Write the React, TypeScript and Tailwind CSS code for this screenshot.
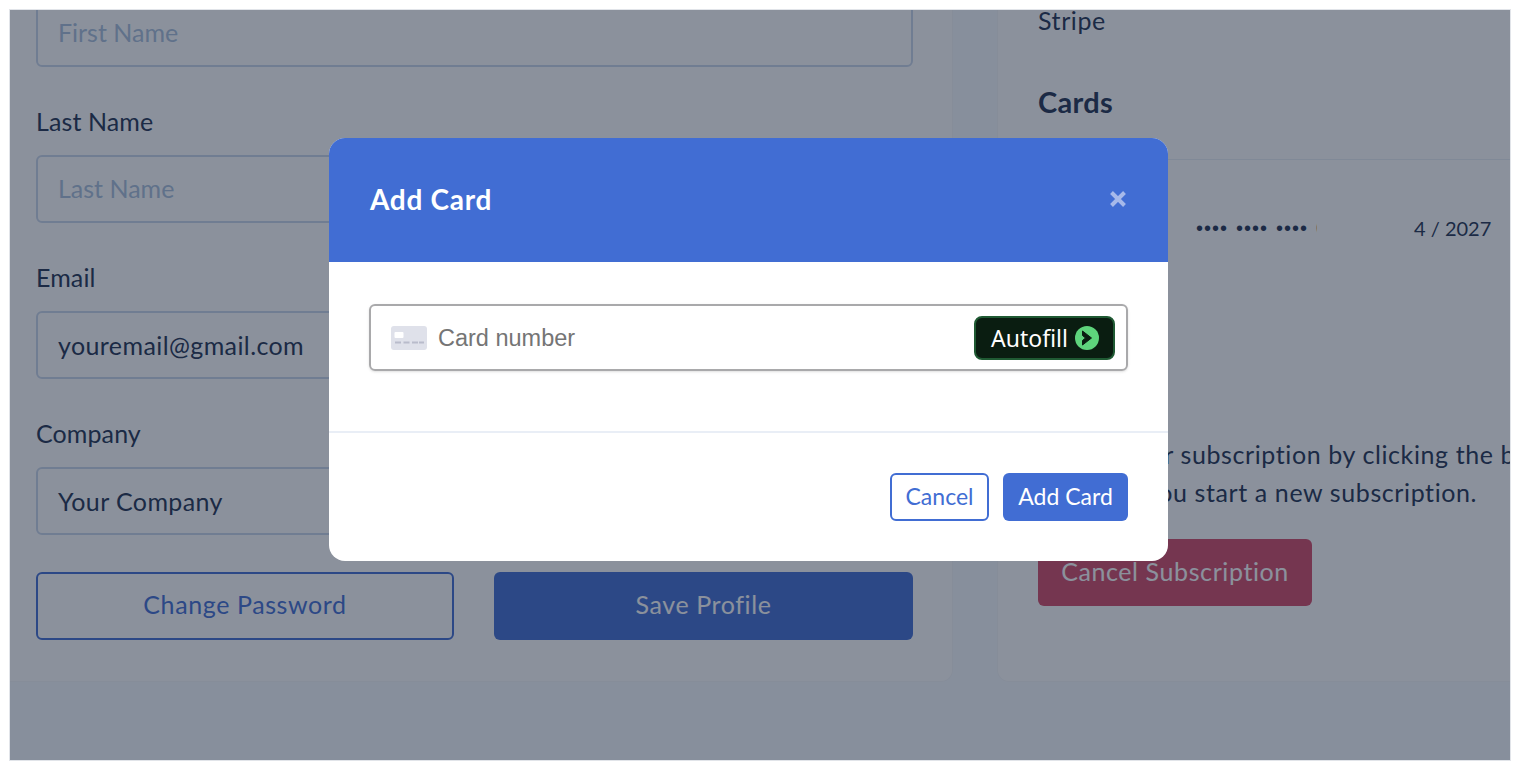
import React from 'react';

const fontBase = "font-['Lato','Open_Sans',sans-serif]";

function Field({ label, placeholder, value }: { label: string; placeholder?: string; value?: string }) {
  return (
    <div className="mb-[37px]">
      <label className="block h-9 mb-[15px] text-[25px] leading-[34px] tracking-[0.1px] text-[#213151]">{label}</label>
      <div className="h-[68px] flex items-center px-5 rounded-md border-2 border-[#c9d6ea] bg-white text-[25px]">
        {value ? <span className="pt-0.5 tracking-[0.4px] text-[#213151]">{value}</span> : <span className="text-[#a8bedb]">{placeholder}</span>}
      </div>
    </div>
  );
}

function CardGlyph() {
  return (
    <svg width="36" height="24" viewBox="0 0 36 24" className="shrink-0">
      <rect width="36" height="24" rx="3" fill="#dfe1ea" />
      <rect x="3.5" y="6" width="9" height="6" rx="1" fill="#ffffff" />
      <path d="M4 16.5h6M12.5 16.5h6M21 16.5h6M28 16.5h5" stroke="#b9bccb" strokeWidth="2" />
    </svg>
  );
}

function AutofillMark() {
  return (
    <svg width="24" height="24" viewBox="0 0 24 24" className="shrink-0">
      <circle cx="12" cy="12" r="12" fill="#5ed47c" />
      <path d="M7.5 5 16.5 12 7.5 19 7.5 14.5 10.5 12 7.5 9.5Z" fill="#0a1d11" stroke="#0a1d11" strokeWidth="1" strokeLinejoin="round" />
    </svg>
  );
}

export default function App() {
  return (
    <div className={`w-[1520px] h-[770px] bg-white p-[9px] ${fontBase}`}>
      <div className="border border-[#e1e4e9] w-[1502px] h-[752px]">
        <div className="relative w-[1500px] h-[750px] overflow-hidden bg-[#f7fbff]">
          <div className="flex gap-[44px] -ml-[15px] -mt-[11px] items-stretch">
            {/* profile form */}
            <div className="w-[958px] shrink-0 bg-white rounded-b-xl border border-[#f4f6f9] border-t-0 pl-10 pr-[39px] pb-[41px] pt-0">
              <div className="h-[68px] flex items-center px-5 rounded-md border-2 border-[#c9d6ea] mb-[37px] text-[25px] text-[#a8bedb]">
                First Name
              </div>
              <Field label="Last Name" placeholder="Last Name" />
              <Field label="Email" value="youremail@gmail.com" />
              <Field label="Company" value="Your Company" />
              <div className="grid grid-cols-[418px_419px] gap-10">
                <button className="h-[68px] rounded-md border-2 border-[#416dd3] text-[#416dd3] text-[25px] tracking-[0.6px] pb-0.5">Change Password</button>
                <button className="h-[68px] rounded-md bg-[#416dd3] text-white text-[25px] tracking-[0.6px] pb-0.5">Save Profile</button>
              </div>
            </div>

            {/* billing */}
            <div className="w-[700px] shrink-0 bg-white rounded-bl-xl border border-[#f4f6f9] border-t-0">
              <div className="px-10 pt-[3px]">
                <div className="h-9 text-[25px] leading-9 tracking-[0.6px] text-[#213151]">Stripe</div>
                <div className="mt-[46px] h-9 text-[29px] leading-9 font-bold tracking-[0.3px] text-[#213151]">Cards</div>
              </div>
              <div className="mt-[39px] border-t border-[#e9eef5] h-[140px] pt-[52px] pl-[198px] flex items-start text-[20px] leading-8 text-[#213151]">
                <span className="w-[121px] overflow-hidden whitespace-nowrap font-['Liberation_Sans',sans-serif] tracking-[1px] [word-spacing:1.4px]">•••• •••• •••• 0000</span>
                <span className="ml-[97px]">4 / 2027</span>
              </div>
              <div className="px-10 mt-[136px] text-[25px] leading-[38px] tracking-[0.6px] text-[#213151] whitespace-nowrap">
                <p>Cancel your subscription by clicking the button below.</p>
                <p className="pl-[6px]">Ended if you start a new subscription.</p>
                <button className="mt-[28px] w-[274px] h-[67px] rounded-md bg-[#d34967] text-white text-[25px] tracking-[0.6px] pb-1">Cancel Subscription</button>
              </div>
            </div>
          </div>

          {/* modal */}
          <div className="absolute inset-0 bg-[#172339]/50 pl-[319px] pt-[128px]">
            <div className="w-[839px] bg-white rounded-2xl overflow-hidden">
              <div className="h-[124px] bg-[#416dd3] px-[41px] pb-[3px] flex items-center justify-between">
                <h3 className="text-[28px] font-bold tracking-[0.7px] text-white">Add Card</h3>
                <svg width="18" height="18" viewBox="0 0 18 18">
                  <path d="M2.5 2.5 15.5 15.5M15.5 2.5 2.5 15.5" stroke="#a6b9ea" strokeWidth="4" />
                </svg>
              </div>
              <div className="px-10 pt-[42px] pb-[60px]">
                <div className="h-[67px] rounded-md border-2 border-[#a9a9ab] shadow-sm flex items-center pl-5 pr-[11px]">
                  <CardGlyph />
                  <span className="ml-[11px] pt-[3px] text-[23.5px] text-[#757575] font-['Liberation_Sans',sans-serif]">Card number</span>
                  <div className="ml-auto w-[141px] h-[44px] pt-px pl-px rounded-lg bg-[#0a1d11] border-2 border-[#1f5a33] flex items-center justify-center gap-[7px] text-white text-[23px] font-['Noto_Sans',sans-serif]">
                    Autofill
                    <AutofillMark />
                  </div>
                </div>
              </div>
              <div className="border-t-2 border-[#e9eef6] px-10 pt-10 pb-10 flex justify-end gap-[14px]">
                <button className="w-[99px] h-12 rounded-md border-2 border-[#416dd3] text-[#416dd3] text-[23px] pb-0.5">Cancel</button>
                <button className="w-[125px] h-12 rounded-md bg-[#416dd3] text-white text-[23px] pb-0.5">Add Card</button>
              </div>
            </div>
          </div>
        </div>
      </div>
    </div>
  );
}
